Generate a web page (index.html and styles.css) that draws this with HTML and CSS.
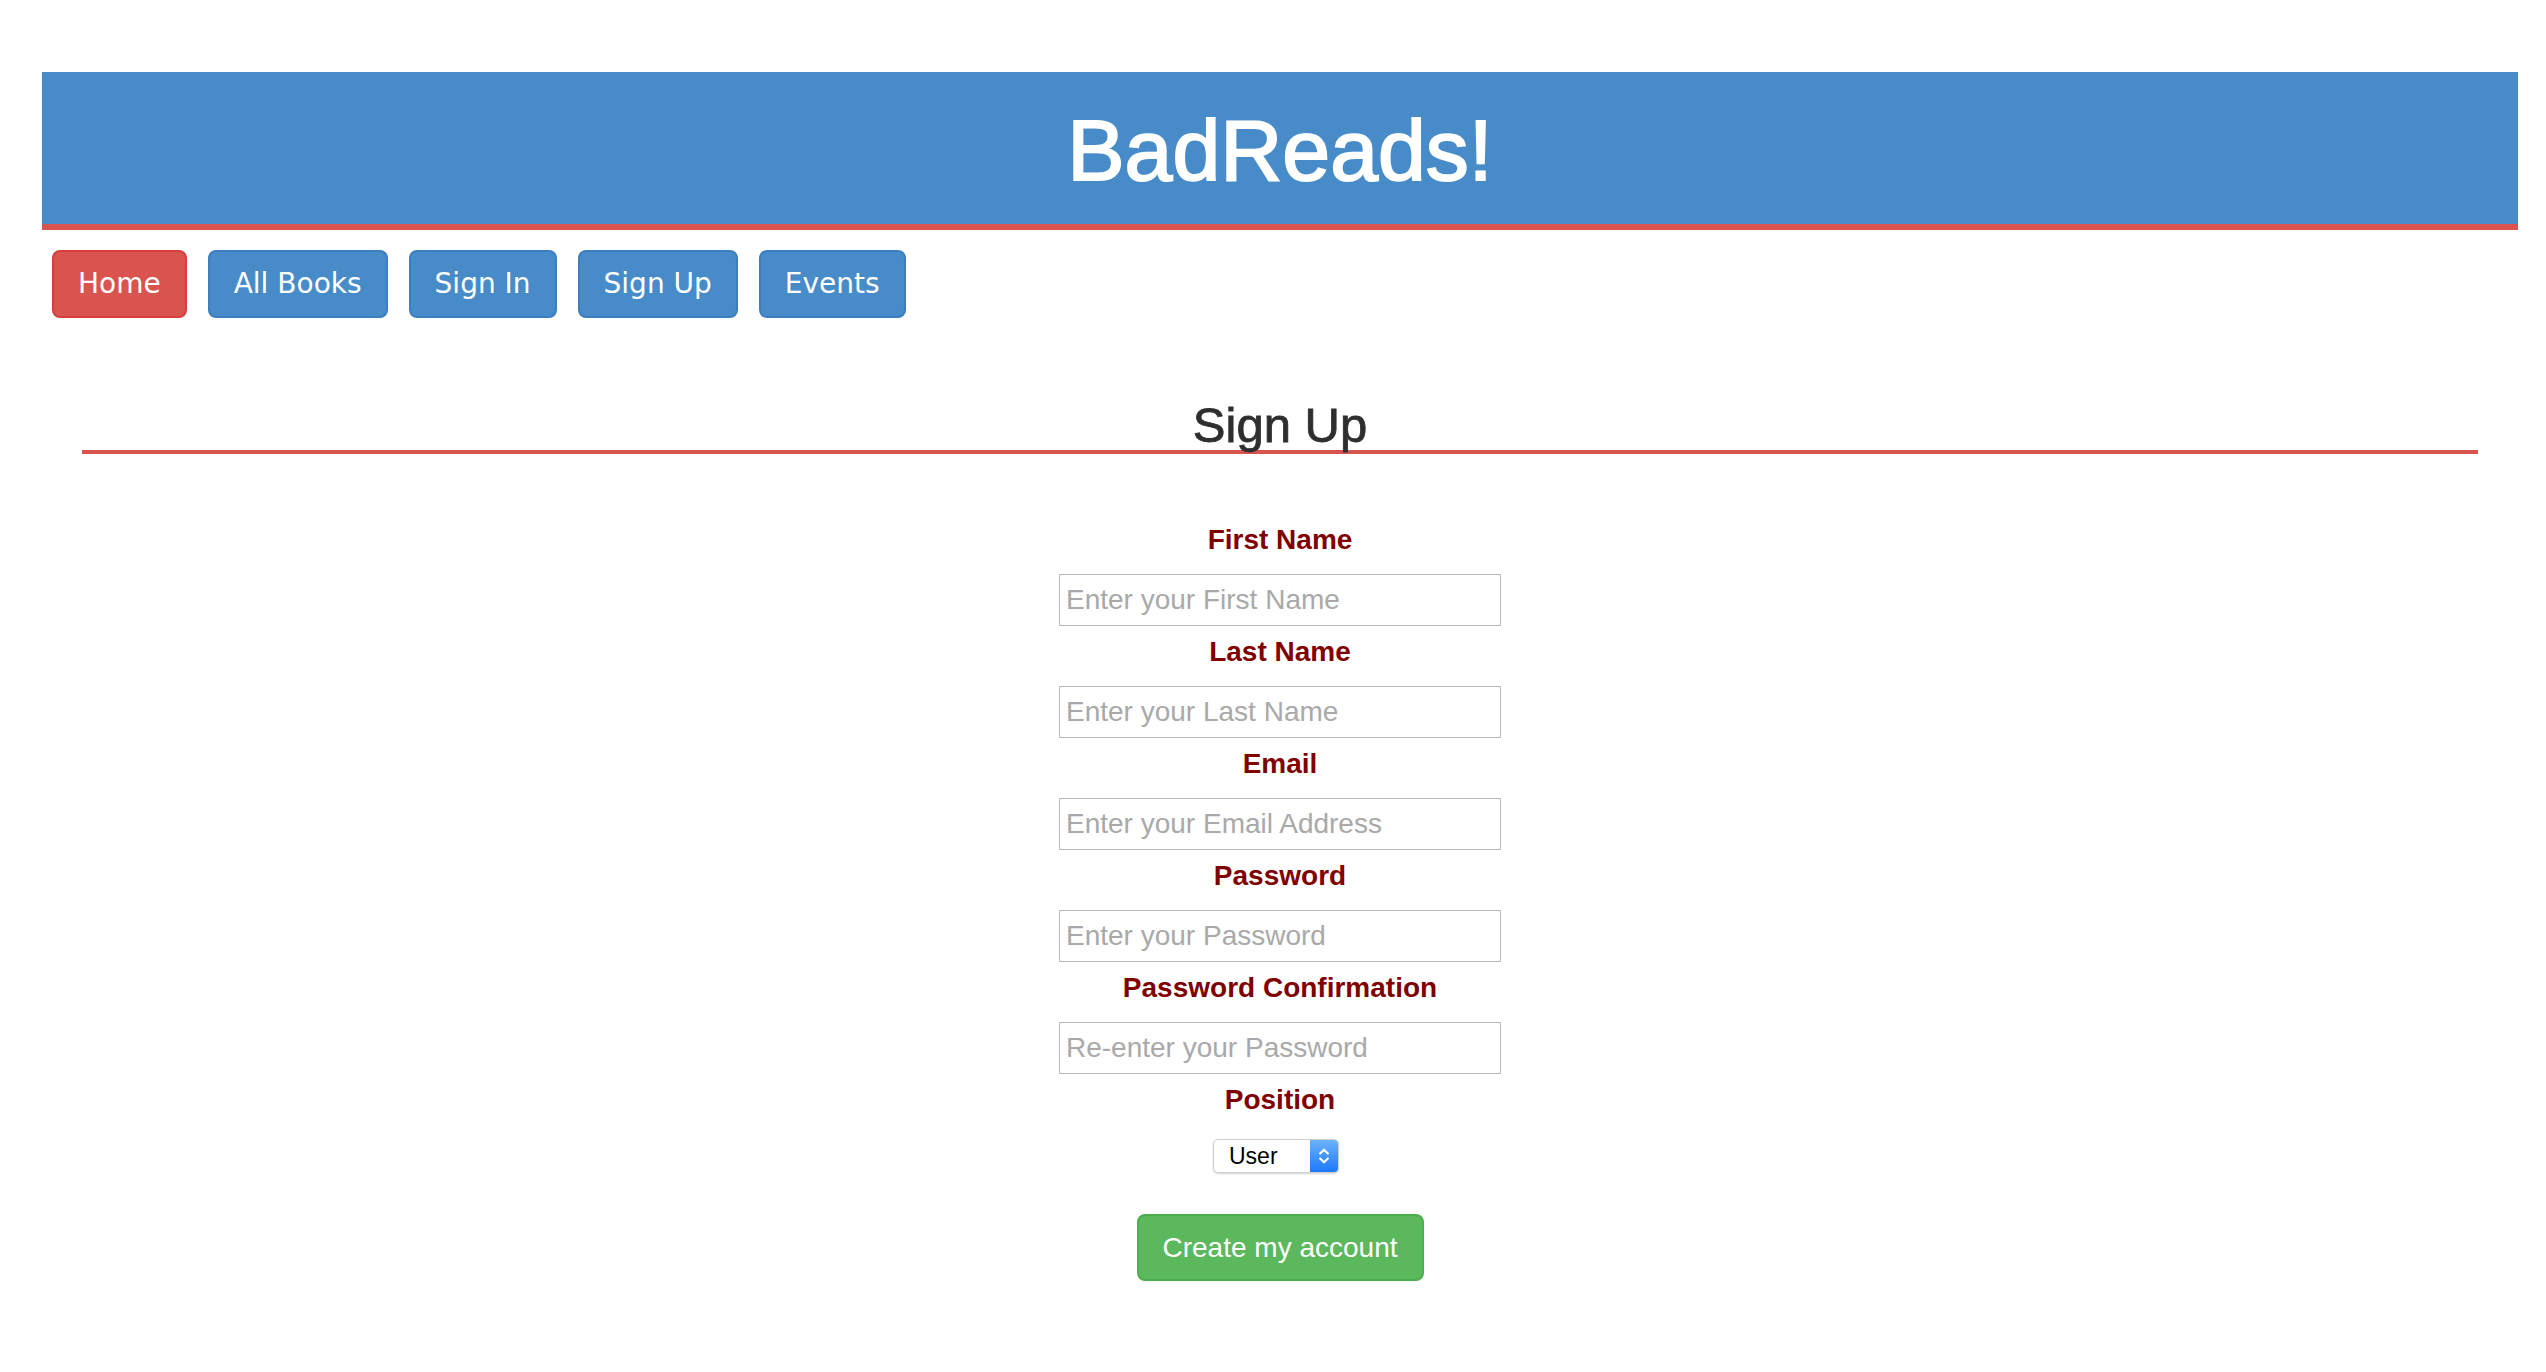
FILE: index.html
```html
<!DOCTYPE html>
<html lang="en">
<head>
<meta charset="utf-8">
<title>BadReads! - Sign Up</title>
<link rel="stylesheet" href="styles.css">
</head>
<body>
<div class="page">
  <header class="banner">
    <h1 class="brand">BadReads!</h1>
  </header>
  <nav class="nav">
    <a class="btn btn-danger" href="#">Home</a>
    <a class="btn btn-primary" href="#">All Books</a>
    <a class="btn btn-primary" href="#">Sign In</a>
    <a class="btn btn-primary" href="#">Sign Up</a>
    <a class="btn btn-primary" href="#">Events</a>
  </nav>
  <main class="content">
    <h2 class="title">Sign Up</h2>
    <form class="signup">
      <label class="field-label" for="first">First Name</label>
      <input class="field" id="first" type="text" placeholder="Enter your First Name">
      <label class="field-label" for="last">Last Name</label>
      <input class="field" id="last" type="text" placeholder="Enter your Last Name">
      <label class="field-label" for="email">Email</label>
      <input class="field" id="email" type="email" placeholder="Enter your Email Address">
      <label class="field-label" for="pw">Password</label>
      <input class="field" id="pw" type="password" placeholder="Enter your Password">
      <label class="field-label" for="pw2">Password Confirmation</label>
      <input class="field" id="pw2" type="password" placeholder="Re-enter your Password">
      <label class="field-label" for="position">Position</label>
      <div class="select-wrap">
        <select class="select" id="position">
          <option>User</option>
          <option>Admin</option>
        </select>
        <span class="select-arrows">
          <svg width="29" height="34" viewBox="0 0 29 34" aria-hidden="true">
            <polyline points="10.5,14.5 14.5,10.5 18.5,14.5" fill="none" stroke="#fff" stroke-width="2.2" stroke-linecap="round" stroke-linejoin="round"/>
            <polyline points="10.5,19.5 14.5,23.5 18.5,19.5" fill="none" stroke="#fff" stroke-width="2.2" stroke-linecap="round" stroke-linejoin="round"/>
          </svg>
        </span>
      </div>
      <div class="actions">
        <button class="btn btn-success" type="submit">Create my account</button>
      </div>
    </form>
  </main>
</div>
</body>
</html>
```

FILE: styles.css
```css
html, body {
  margin: 0;
  padding: 0;
  background: #ffffff;
}

body {
  font-family: "Liberation Sans", Arial, Helvetica, sans-serif;
  color: #333333;
}

.page {
  padding: 72px 28px 40px 42px;
}

.banner {
  background: #478cc9;
  border-bottom: 6px solid #d9534f;
  padding: 36px 0 31px;
  text-align: center;
}

.brand {
  margin: 0;
  font-family: "Liberation Sans", Arial, sans-serif;
  font-weight: normal;
  font-size: 86px;
  line-height: 85px;
  color: #ffffff;
  -webkit-text-stroke: 2px #ffffff;
}

.nav {
  display: flex;
  gap: 21px;
  margin-top: 20px;
  padding-left: 10px;
}

.btn {
  display: inline-block;
  box-sizing: border-box;
  border: 2px solid transparent;
  border-radius: 8px;
  padding: 12px 24px;
  font-size: 28px;
  line-height: 40px;
  color: #ffffff;
  text-decoration: none;
  cursor: pointer;
}

.nav .btn {
  font-family: "DejaVu Sans", Verdana, sans-serif;
}

.btn-primary {
  background: #478cc9;
  border-color: #3b7fbf;
}

.btn-danger {
  background: #d9534f;
  border-color: #d43f3a;
}

.btn-success {
  background: #5cb85c;
  border-color: #4cae4c;
  font-family: "Liberation Sans", Arial, sans-serif;
  padding: 12px 24px 11px;
}

.content {
  padding: 0;
}

.title {
  margin: 82px 40px 0;
  font-family: "Liberation Sans", Arial, sans-serif;
  font-weight: normal;
  font-size: 49px;
  line-height: 50px;
  color: #2e2e2e;
  text-align: center;
  border-bottom: 4px solid #d9534f;
  -webkit-text-stroke: 0.8px #2e2e2e;
}

.signup {
  width: 442px;
  margin: 66px auto 0;
}

.field-label {
  display: block;
  margin: 6px 0 14px;
  font-family: "Liberation Sans", Arial, sans-serif;
  font-weight: bold;
  font-size: 28px;
  line-height: 40px;
  color: #800000;
  text-align: center;
}

.field {
  display: block;
  box-sizing: border-box;
  width: 442px;
  height: 52px;
  margin: 0;
  padding: 0 6px;
  border: 1px solid #bcbcbc;
  border-radius: 0;
  font-family: "Liberation Sans", Arial, sans-serif;
  font-size: 28px;
  color: #333333;
  background: #ffffff;
  outline: none;
}

.field::placeholder {
  color: #a9a9a9;
  opacity: 1;
}

.select-wrap {
  display: flex;
  box-sizing: border-box;
  width: 126px;
  height: 34px;
  margin: 19px 0 0 154px;
  border: 1px solid #cfcfcf;
  border-radius: 5px;
  overflow: hidden;
  background: #ffffff;
  box-shadow: 0 1px 2px rgba(0, 0, 0, 0.18);
}

.select {
  flex: 1;
  min-width: 0;
  -webkit-appearance: none;
  appearance: none;
  border: none;
  background: transparent;
  margin: 0;
  padding: 0 0 0 15px;
  font-family: "Liberation Sans", Arial, sans-serif;
  font-size: 23px;
  line-height: 32px;
  color: #000000;
  outline: none;
}

.select-arrows {
  display: flex;
  width: 28px;
  background: linear-gradient(#6db3fb, #1d79fd);
}

.select-arrows svg {
  display: block;
  margin-top: -1px;
}

.actions {
  margin-top: 41px;
  text-align: center;
}
```
